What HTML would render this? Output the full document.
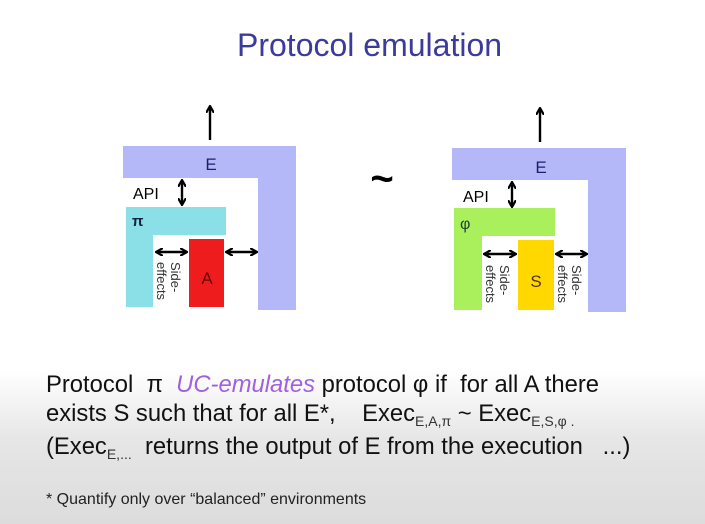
<!DOCTYPE html>
<html><head><style>
body{margin:0;width:705px;height:524px;overflow:hidden;background:linear-gradient(#fff 0,#fff 370px,#e6e6e6 440px,#dcdcdc 524px);font-family:"Liberation Sans",sans-serif;position:relative}
.t{position:absolute;white-space:nowrap;transform-origin:0 0}
sub{font-size:14px;vertical-align:-5px;color:#333}
</style></head><body>
<div class="t" style="left:237px;top:27px;font-size:32px;color:#3b3b9c">Protocol emulation</div>
<svg width="705" height="524" style="position:absolute;left:0;top:0" font-family="Liberation Sans, sans-serif">
<defs><marker id="h" markerWidth="8" markerHeight="8" refX="6" refY="4" orient="auto-start-reverse" markerUnits="userSpaceOnUse"><path d="M0,0 L7,4 L0,8" fill="none" stroke="#000" stroke-width="2.2"/></marker></defs>
<path d="M123,146H296V310H258V178H123Z" fill="#b4b8f8"/>
<text x="211" y="170" font-size="17" fill="#1e1e6a" text-anchor="middle">E</text>
<line x1="210" y1="140" x2="210" y2="107" stroke="#000" stroke-width="2.4" marker-end="url(#h)"/>
<text x="133" y="199" font-size="16">API</text>
<line x1="182" y1="181" x2="182" y2="204" stroke="#000" stroke-width="2.4" marker-start="url(#h)" marker-end="url(#h)"/>
<path d="M126,207H226V235H153V307H126Z" fill="#8ae0e6"/>
<text x="132" y="226" font-size="15" fill="#124" font-weight="bold">π</text>
<rect x="189" y="239" width="35" height="68" fill="#ee1c1c"/>
<text x="207" y="284" font-size="17" fill="#600" text-anchor="middle">A</text>
<line x1="157" y1="252" x2="186" y2="252" stroke="#000" stroke-width="2.4" marker-start="url(#h)" marker-end="url(#h)"/>
<line x1="227" y1="252" x2="256" y2="252" stroke="#000" stroke-width="2.4" marker-start="url(#h)" marker-end="url(#h)"/>
<g transform="translate(171,262) rotate(90)" font-size="13" fill="#333"><text x="0" y="0">Side-</text><text x="0" y="14">effects</text></g>
<text x="382" y="192" font-size="40" font-weight="bold" text-anchor="middle">~</text>
<path d="M452,148H626V312H588V180H452Z" fill="#b4b8f8"/>
<text x="541" y="173" font-size="17" fill="#1e1e6a" text-anchor="middle">E</text>
<line x1="540" y1="142" x2="540" y2="109" stroke="#000" stroke-width="2.4" marker-end="url(#h)"/>
<text x="463" y="202" font-size="16">API</text>
<line x1="512" y1="183" x2="512" y2="206" stroke="#000" stroke-width="2.4" marker-start="url(#h)" marker-end="url(#h)"/>
<path d="M454,208H555V236H482V310H454Z" fill="#aaf05c"/>
<text x="460" y="229" font-size="16" fill="#243">φ</text>
<rect x="518" y="240" width="36" height="70" fill="#ffd800"/>
<text x="536" y="287" font-size="17" fill="#530" text-anchor="middle">S</text>
<line x1="485" y1="254" x2="515" y2="254" stroke="#000" stroke-width="2.4" marker-start="url(#h)" marker-end="url(#h)"/>
<line x1="557" y1="254" x2="586" y2="254" stroke="#000" stroke-width="2.4" marker-start="url(#h)" marker-end="url(#h)"/>
<g transform="translate(500,265) rotate(90)" font-size="13" fill="#333"><text x="0" y="0">Side-</text><text x="0" y="14">effects</text></g>
<g transform="translate(572,265) rotate(90)" font-size="13" fill="#333"><text x="0" y="0">Side-</text><text x="0" y="14">effects</text></g>
</svg>
<div class="t" style="left:46px;top:370px;font-size:23.8px;color:#111;line-height:29px">Protocol &nbsp;π &nbsp;<i style="color:#a060e0">UC-emulates</i> protocol φ if &nbsp;for all A there<br>exists S such that for all E*, &nbsp;&nbsp;&nbsp;Exec<sub>E,A,π</sub> ~ Exec<sub>E,S,φ .</sub></div>
<div class="t" style="left:46px;top:433px;font-size:23.8px;color:#111">(Exec<sub>E,...</sub> &nbsp;returns the output of E from the execution &nbsp;&nbsp;...)</div>
<div class="t" style="left:46px;top:491px;font-size:16px;color:#222">* Quantify only over “balanced” environments</div>
</body></html>
